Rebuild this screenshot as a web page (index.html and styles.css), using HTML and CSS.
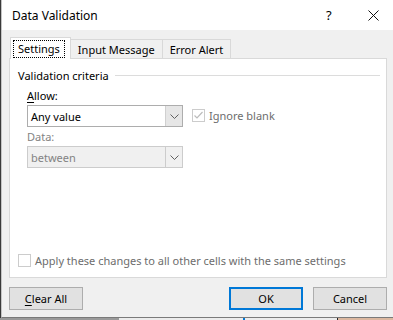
FILE: index.html
```html
<!DOCTYPE html>
<html lang="en">
  <head>
    <meta charset="UTF-8" />
    <meta name="viewport" content="width=device-width, initial-scale=1.0" />
    <title>Data Validation</title>
    <link rel="stylesheet" href="styles.css">
  </head>
  <body>
    <div id="screen">
      <div id="sheet-edge"></div>
      <div id="dialog">
        <div id="titlebar">
          <span class="title">Data Validation</span>
          <span class="help">?</span>
          <span class="close">
            <svg viewBox="0 0 11 11" width="11" height="11">
              <path d="M0.5 0.5L10.5 10.5M10.5 0.5L0.5 10.5" stroke="#111" stroke-width="1" fill="none" />
            </svg>
          </span>
        </div>
        <div id="content">
          <div class="tabs">
            <div class="tab active"><span class="focus">Settings</span></div>
            <div class="tab">Input Message</div>
            <div class="tab">Error Alert</div>
          </div>
          <div class="panel">
            <div class="group-title">
              <span>Validation criteria</span>
              <div class="rule"></div>
            </div>
            <div class="criteria">
              <div class="fields">
                <div class="label"><u>A</u>llow:</div>
                <div class="combo">
                  <span class="value">Any value</span>
                  <span class="arrow">
                    <svg viewBox="0 0 9 5" width="9" height="5">
                      <path d="M0.5 0.5L4.5 4.5L8.5 0.5" stroke="#606060" stroke-width="1" fill="none" />
                    </svg>
                  </span>
                </div>
                <div class="label disabled">Data:</div>
                <div class="combo disabled">
                  <span class="value">between</span>
                  <span class="arrow">
                    <svg viewBox="0 0 9 5" width="9" height="5">
                      <path d="M0.5 0.5L4.5 4.5L8.5 0.5" stroke="#606060" stroke-width="1" fill="none" />
                    </svg>
                  </span>
                </div>
              </div>
              <label class="check disabled ignore">
                <span class="box">
                  <svg viewBox="0 0 11 11" width="11" height="11">
                    <path d="M1.5 5.5L4 8L9.5 2" stroke="#bcbcbc" stroke-width="1.2" fill="none" />
                  </svg>
                </span>
                Ignore blank
              </label>
            </div>
            <label class="check disabled apply">
              <span class="box"></span>
              Apply these changes to all other cells with the same settings
            </label>
          </div>
          <div class="footer">
            <button class="btn"><u>C</u>lear All</button>
            <div class="spacer"></div>
            <button class="btn default">OK</button>
            <button class="btn">Cancel</button>
          </div>
        </div>
      </div>
    </div>
    <div id="sheet-row">
      <div class="cell grey"></div>
      <div class="cell light"></div>
      <div class="cell blue"></div>
      <div class="cell light wide"></div>
      <div class="cell tan"></div>
    </div>
  </body>
</html>
```

FILE: styles.css
```css
body {
  margin: 0;
  padding: 0;
  width: 393px;
  height: 320px;
  overflow: hidden;
  font-family: "Noto Sans", sans-serif;
  font-size: 11px;
  color: #000;
  background: #f0f0f0;
}

#screen {
  display: flex;
  height: 318px;
}

#sheet-edge {
  width: 1px;
  flex-shrink: 0;
  background: #3a3a3a;
}

#dialog {
  flex: 1;
  display: flex;
  flex-direction: column;
  border-left: 1px solid #c4c4c4;
  border-bottom: 1px solid #7a7a7a;
  background: #f0f0f0;
  box-sizing: border-box;
}

#titlebar {
  height: 30px;
  flex-shrink: 0;
  background: #fff;
  display: flex;
  align-items: center;
  font-size: 12px;
}

#titlebar .title {
  padding-left: 10px;
  flex: 1;
}

#titlebar .help {
  width: 10px;
  margin-right: 32px;
  font-size: 13px;
}

#titlebar .close {
  display: flex;
  width: 11px;
  margin-right: 14px;
}

#content {
  flex: 1;
  display: flex;
  flex-direction: column;
  padding: 7px 6px 0 7px;
}

.tabs {
  display: flex;
  align-items: flex-end;
  height: 21px;
  padding-left: 1px;
  position: relative;
  z-index: 1;
}

.tab {
  height: 19px;
  padding: 0 7px;
  box-sizing: border-box;
  border: 1px solid #d9d9d9;
  border-bottom: none;
  background: #f0f0f0;
  display: flex;
  align-items: center;
  margin-left: -1px;
  line-height: 1;
}

.tab.active {
  height: 22px;
  margin-bottom: -1px;
  background: #fff;
  padding: 0 5px 0 2px;
  margin-left: 0;
  z-index: 2;
}

.tab.active .focus {
  border: 1px dotted #000;
  padding: 2px 4px 3px;
}

.panel {
  height: 220px;
  box-sizing: border-box;
  border: 1px solid #d9d9d9;
  background: #fff;
  padding: 9px 8px 0 8px;
  display: flex;
  flex-direction: column;
}

.group-title {
  display: flex;
  align-items: center;
  height: 14px;
}

.group-title .rule {
  flex: 1;
  height: 1px;
  background: #dcdcdc;
  margin-left: 6px;
  margin-right: -2px;
}

.criteria {
  display: flex;
  padding-left: 9px;
  margin-top: 6px;
}

.fields {
  width: 156px;
  display: flex;
  flex-direction: column;
}

.label {
  height: 15px;
  line-height: 15px;
  margin-bottom: 2px;
}

.label.disabled {
  color: #838383;
  margin-top: 2px;
}

.label u {
  text-underline-offset: 2px;
}

.combo {
  height: 22px;
  box-sizing: border-box;
  border: 1px solid #adadad;
  background: #fff;
  display: flex;
  align-items: stretch;
}

.combo .value {
  flex: 1;
  padding-left: 3px;
  display: flex;
  align-items: center;
}

.combo .arrow {
  width: 16px;
  background: #e6e6e6;
  border-left: 1px solid #d0d0d0;
  display: flex;
  align-items: center;
  justify-content: center;
}

.combo.disabled {
  background: #f0f0f0;
  border-color: #cccccc;
  color: #838383;
}

.combo.disabled .arrow {
  background: #f0f0f0;
  border-left-color: #cccccc;
}

.check {
  display: flex;
  align-items: center;
  gap: 4px;
  height: 15px;
}

.check.disabled {
  color: #6d6d6d;
}

.check .box {
  width: 13px;
  height: 13px;
  box-sizing: border-box;
  border: 1px solid #cccccc;
  background: #fff;
  display: flex;
  align-items: center;
  justify-content: center;
}

.ignore {
  margin-left: 9px;
  margin-top: 20px;
}

.apply {
  margin-top: auto;
  margin-bottom: 9px;
}

.footer {
  display: flex;
  margin-top: 9px;
  gap: 10px;
}

.footer .spacer {
  flex: 1;
}

.btn {
  width: 74px;
  height: 23px;
  border: 1px solid #adadad;
  background: #e1e1e1;
  font-family: "Noto Sans", sans-serif;
  font-size: 11px;
  color: #000;
  padding: 0;
}

.btn.default {
  border: 2px solid #0078d7;
}

.btn u {
  text-underline-offset: 2px;
}

#sheet-row {
  display: flex;
  height: 2px;
  overflow: hidden;
}

.cell.grey {
  width: 119px;
  background: #9a9a9a;
}

.cell.light {
  width: 124px;
  background: #ececec;
}

.cell.blue {
  width: 2px;
  background: #0078d7;
}

.cell.wide {
  width: 92px;
  border-right: 1px solid #222;
}

.cell.tan {
  flex: 1;
  background: #dcb8a0;
}
```
